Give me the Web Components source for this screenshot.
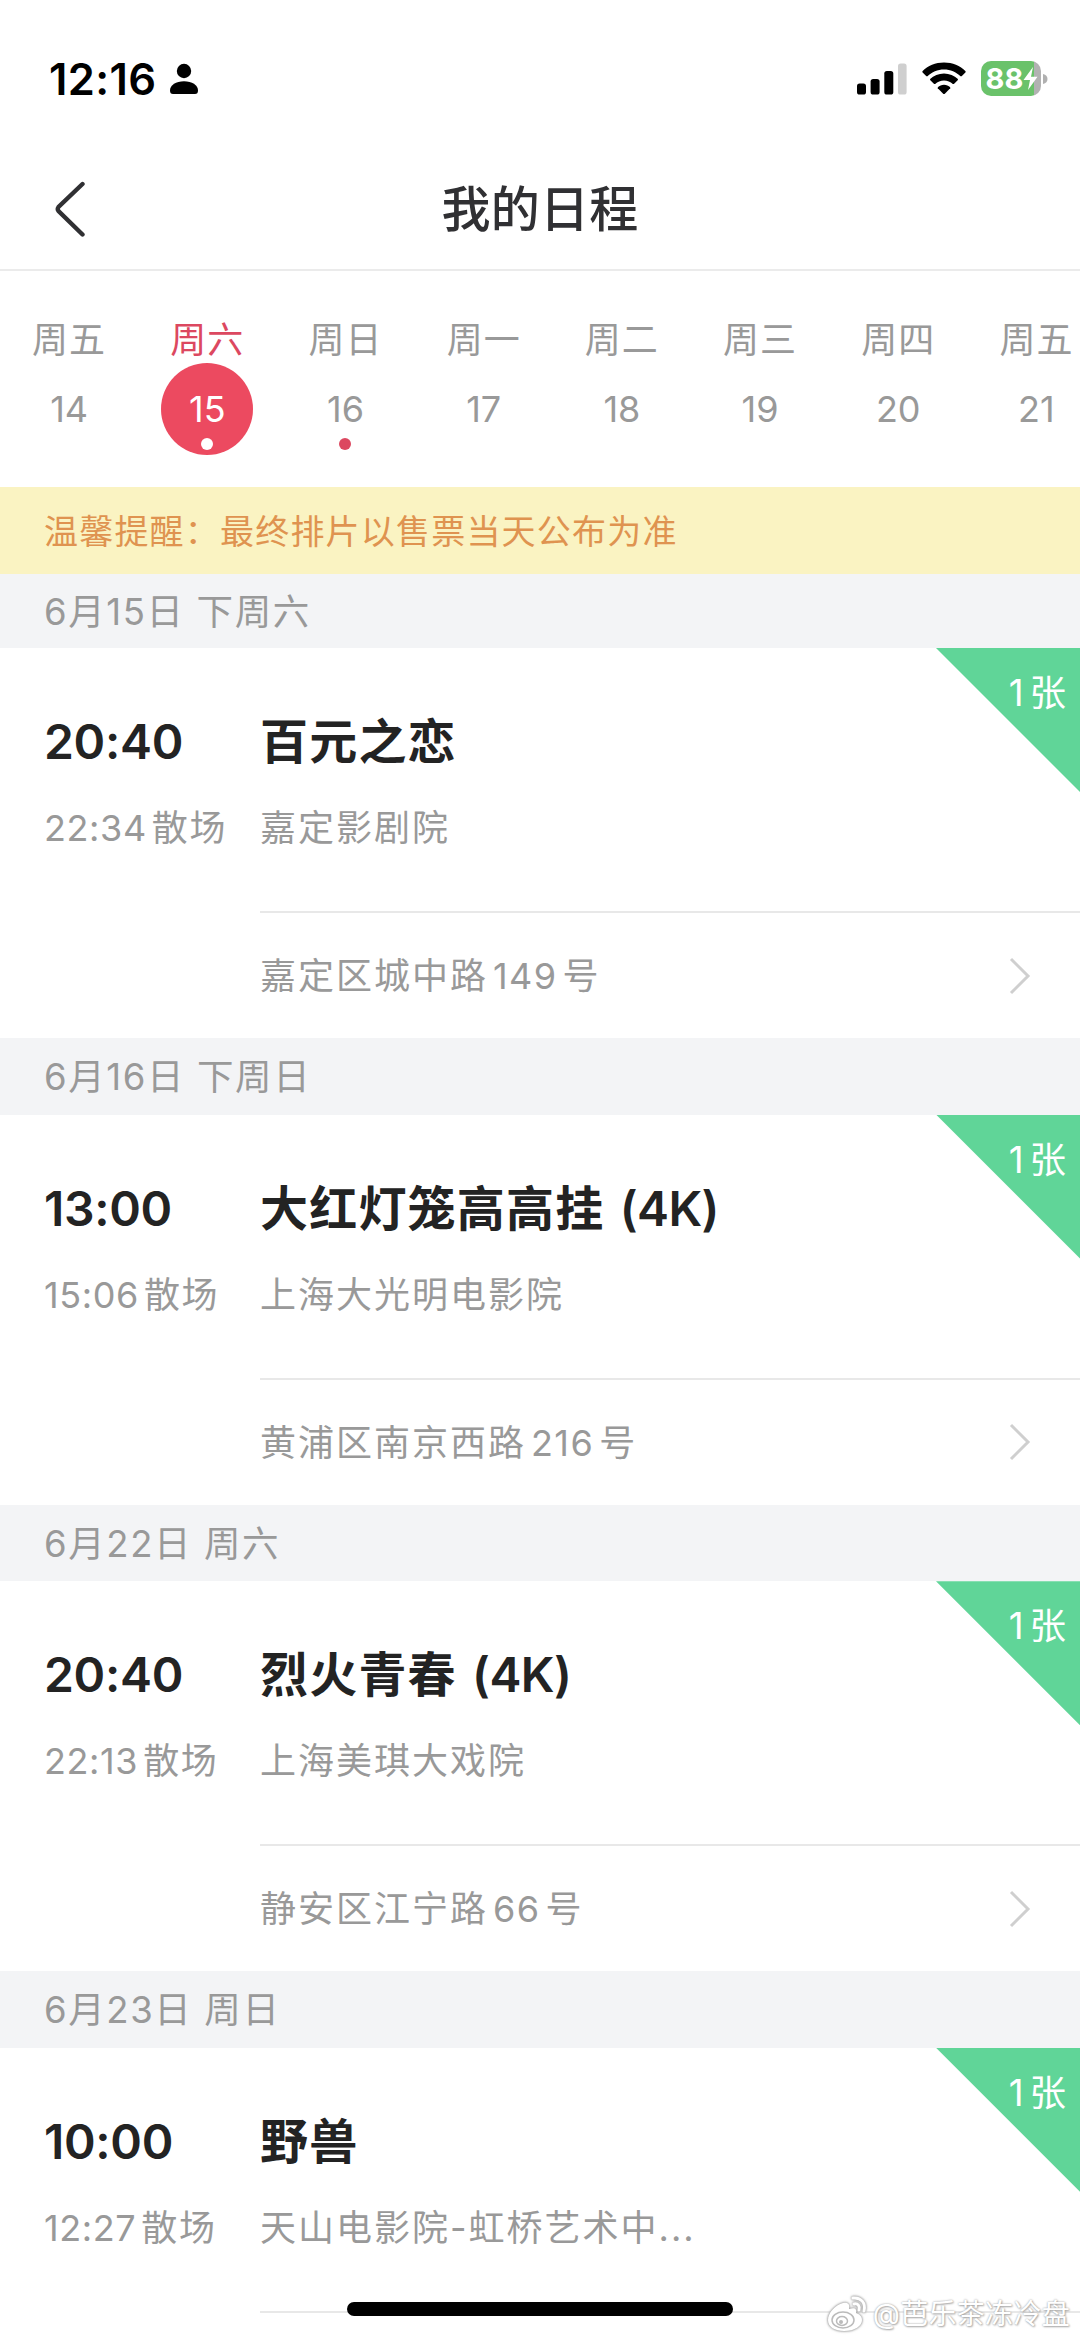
<!DOCTYPE html>
<html lang="zh-CN">
<head>
<meta charset="utf-8">
<meta name="viewport" content="width=device-width, initial-scale=1">
<title>我的日程</title>
<style>
  body {
    margin: 0;
    background: #fff;
    font-family: Inter, "Noto Sans CJK SC", sans-serif;
    color: #232323;
  }
</style>
</head>
<body>
<schedule-app>
  <status-bar time="12:16" battery="88"></status-bar>
  <nav-header>我的日程</nav-header>
  <week-strip>
    <day-cell label="周五" day="14"></day-cell>
    <day-cell label="周六" day="15" selected marked></day-cell>
    <day-cell label="周日" day="16" marked></day-cell>
    <day-cell label="周一" day="17"></day-cell>
    <day-cell label="周二" day="18"></day-cell>
    <day-cell label="周三" day="19"></day-cell>
    <day-cell label="周四" day="20"></day-cell>
    <day-cell label="周五" day="21"></day-cell>
  </week-strip>
  <notice-bar>温馨提醒：最终排片以售票当天公布为准</notice-bar>
  <day-group date="6月15日 下周六">
    <ticket-item start="20:40" end="22:34" count="1" address="嘉定区城中路149号">
      百元之恋
      <span slot="cinema">嘉定影剧院</span>
    </ticket-item>
  </day-group>
  <day-group date="6月16日 下周日">
    <ticket-item start="13:00" end="15:06" count="1" address="黄浦区南京西路216号">
      大红灯笼高高挂 <b>(4K)</b>
      <span slot="cinema">上海大光明电影院</span>
    </ticket-item>
  </day-group>
  <day-group date="6月22日 周六">
    <ticket-item start="20:40" end="22:13" count="1" address="静安区江宁路66号">
      烈火青春 <b>(4K)</b>
      <span slot="cinema">上海美琪大戏院</span>
    </ticket-item>
  </day-group>
  <day-group date="6月23日 周日">
    <ticket-item start="10:00" end="12:27" count="1">
      野兽
      <span slot="cinema">天山电影院-虹桥艺术中...</span>
    </ticket-item>
  </day-group>
  <home-indicator slot="overlay"></home-indicator>
  <water-mark slot="overlay">@芭乐茶冻冷盘</water-mark>
</schedule-app>

<script>
class ScheduleApp extends HTMLElement {
  constructor() {
    super();
    this.attachShadow({ mode: 'open' });
    this.shadowRoot.innerHTML = `
      <style>
        :host {
          display: flex;
          flex-direction: column;
          position: relative;
          width: 1080px;
          height: 2339px;
          overflow: hidden;
          background: #fff;
        }
      </style>
      <slot></slot>
      <slot name="overlay"></slot>
    `;
  }
}

class StatusBar extends HTMLElement {
  connectedCallback() {
    this.attachShadow({ mode: 'open' });
    this.shadowRoot.innerHTML = `
      <style>
        :host {
          display: flex;
          align-items: center;
          flex: none;
          box-sizing: border-box;
          height: 157px;
          padding: 0 32px 0 49px;
          color: #000;
        }
        .time {
          font-size: 43.5px;
          font-weight: 600;
          letter-spacing: 0.4px;
          margin-right: 12px;
        }
        .icons {
          display: flex;
          align-items: center;
          margin-left: auto;
        }
        .wifi { margin: 0 15px; }
        .battery {
          display: flex;
          align-items: center;
          justify-content: center;
          box-sizing: border-box;
          width: 60px;
          height: 35px;
          padding-left: 2px;
          border-radius: 10px;
          background: linear-gradient(90deg, #6ac26a 53px, #b2b2b2 53px);
          color: #fff;
          font-size: 29px;
          font-weight: 700;
        }
        .nub { margin-left: 2px; }
        svg { display: block; }
      </style>
      <span class="time">${this.getAttribute('time')}</span>
      <svg width="30" height="32" viewBox="0 0 30 32">
        <circle cx="15" cy="8" r="7.2"/>
        <path d="M1 27.500C1 22 7 18.200 15 18.200S29 22 29 27.500C29 30 28 31 26 31H4C2 31 1 30 1 27.500z"/>
      </svg>
      <div class="icons">
        <svg width="50" height="32" viewBox="0 0 50 32">
          <rect x="0" y="20.5" width="9" height="11" rx="2.6"/>
          <rect x="13.6" y="16" width="9" height="15.5" rx="2.6"/>
          <rect x="27.3" y="8" width="9" height="23.5" rx="2.6"/>
          <rect x="41" y="0.5" width="8.6" height="31" rx="2.6" fill="#cfcfcf"/>
        </svg>
        <svg class="wifi" width="44" height="33" viewBox="0 0 44 33">
          <path d="M22 .5C30.500.5 38.200 3.800 43.600 9.200L43.600 10.200 39.600 14.300 38.500 14.300C34.200 10.100 28.400 7.500 22 7.500S9.800 10.100 5.500 14.300L4.400 14.300.4 10.200.4 9.200C5.800 3.800 13.500.5 22 .5z"/>
          <path d="M22 11.500C27.400 11.500 32.300 13.600 35.900 17.100L35.900 18.100 31.900 22.100 30.800 22.100C28.500 19.900 25.400 18.500 22 18.500S15.500 19.900 13.200 22.100L12.100 22.100 8.100 18.100 8.100 17.100C11.700 13.600 16.600 11.500 22 11.500z"/>
          <path d="M22 22.800C24.400 22.800 26.600 23.700 28.200 25.200L28.200 26.200 22.600 32 21.400 32 15.800 26.200 15.800 25.200C17.400 23.700 19.600 22.800 22 22.800z"/>
        </svg>
        <div class="battery">${this.getAttribute('battery')}<svg width="15" height="25" viewBox="0 0 15 25"><path d="M10 1L.5 14H7L5 24 14.500 10.800H8z" fill="#fff"/></svg></div>
        <svg class="nub" width="5" height="12" viewBox="0 0 5 12"><path d="M0 1C3 1.500 4.500 3.500 4.500 6S3 10.500 0 11z" fill="#b0b0b0"/></svg>
      </div>
    `;
  }
}

class NavHeader extends HTMLElement {
  constructor() {
    super();
    this.attachShadow({ mode: 'open' });
    this.shadowRoot.innerHTML = `
      <style>
        :host {
          display: grid;
          grid-template-columns: 1fr auto 1fr;
          align-items: center;
          flex: none;
          box-sizing: border-box;
          height: 114px;
          padding: 0 54px 6px;
          border-bottom: 2px solid #ebebeb;
          color: #303033;
        }
        h1 {
          margin: 0;
          font-size: 49px;
          font-weight: 500;
          line-height: 60px;
          letter-spacing: 0.3px;
        }
      </style>
      <svg width="34" height="58" viewBox="0 0 34 58" fill="none" stroke="currentColor" stroke-width="4.400" stroke-linecap="round">
        <path d="M28.500 3L4.500 26Q3 28 4.500 30L28.500 53.500"/>
      </svg>
      <h1><slot></slot></h1>
    `;
  }
}

class WeekStrip extends HTMLElement {
  constructor() {
    super();
    this.attachShadow({ mode: 'open' });
    this.shadowRoot.innerHTML = `
      <style>
        :host {
          display: flex;
          flex: none;
          box-sizing: border-box;
          height: 216px;
          padding-top: 46px;
          overflow: hidden;
        }
      </style>
      <slot></slot>
    `;
  }
}

class DayCell extends HTMLElement {
  connectedCallback() {
    this.attachShadow({ mode: 'open' });
    this.shadowRoot.innerHTML = `
      <style>
        :host {
          display: flex;
          flex-direction: column;
          align-items: center;
          flex: none;
          width: 138.2px;
          color: #999;
          font-size: 36px;
        }
        .label {
          height: 46px;
          line-height: 47px;
          letter-spacing: 1px;
        }
        .day {
          position: relative;
          width: 92px;
          height: 92px;
          border-radius: 50%;
          line-height: 93px;
          text-align: center;
        }
        .dot {
          display: none;
          position: absolute;
          left: 40px;
          bottom: 5px;
          width: 12px;
          height: 12px;
          border-radius: 50%;
          background: #dc4860;
        }
        :host([selected]) .label { color: #dc4860; }
        :host([selected]) .day { background: #ec4a60; color: #fff; }
        :host([marked]) .dot { display: block; }
        :host([selected]) .dot { background: #fff; }
      </style>
      <span class="label">${this.getAttribute('label')}</span>
      <div class="day">${this.getAttribute('day')}<span class="dot"></span></div>
    `;
  }
}

class NoticeBar extends HTMLElement {
  constructor() {
    super();
    this.attachShadow({ mode: 'open' });
    this.shadowRoot.innerHTML = `
      <style>
        :host {
          display: block;
          flex: none;
          height: 87px;
          padding-left: 44px;
          background: #faf3c2;
          color: #df9350;
          font-size: 34px;
          line-height: 90px;
          letter-spacing: 1.2px;
        }
      </style>
      <slot></slot>
    `;
  }
}

class DayGroup extends HTMLElement {
  connectedCallback() {
    this.attachShadow({ mode: 'open' });
    this.shadowRoot.innerHTML = `
      <style>
        :host {
          display: block;
          flex: none;
        }
        h2 {
          margin: 0;
          height: 76.6px;
          padding-left: 44px;
          background: #f3f4f6;
          color: #999;
          font-size: 36.5px;
          font-weight: 400;
          line-height: 79px;
          letter-spacing: 1.6px;
        }
        :host(:first-of-type) h2 {
          height: 74px;
          line-height: 76px;
        }
      </style>
      <h2>${this.getAttribute('date')}</h2>
      <slot></slot>
    `;
  }
}

class TicketItem extends HTMLElement {
  connectedCallback() {
    // house numbers get a little air on both sides
    const address = (this.getAttribute('address') || '')
      .replace(/\d+/, '<span class="num">$&</span>');

    this.attachShadow({ mode: 'open' });
    this.shadowRoot.innerHTML = `
      <style>
        :host {
          display: grid;
          grid-template-columns: 216px 1fr;
          grid-template-rows: 263px 127px;
          position: relative;
          padding-left: 44px;
          background: #fff;
          color: #999;
          font-size: 36px;
          letter-spacing: 2px;
          white-space: nowrap;
        }
        .main, .when { padding-top: 64px; }
        h3, time {
          display: block;
          height: 60px;
          margin: 0 0 26px;
          color: #232323;
          font-size: 48px;
          font-weight: 600;
          line-height: 60px;
          letter-spacing: -0.3px;
        }
        h3 {
          letter-spacing: 1.2px;
        }
        ::slotted(b) {
          font-weight: 600;
          letter-spacing: -0.6px;
          margin-left: 2px;
        }
        p {
          margin: 0;
          line-height: 60px;
        }
        .end { letter-spacing: 0.6px; }
        .end span {
          margin-left: 5px;
          letter-spacing: 1.6px;
        }
        .address {
          grid-column: 2;
          display: flex;
          align-items: center;
          justify-content: space-between;
          padding-right: 48px;
          border-top: 2px solid #e8e8e8;
        }
        .address div { padding-bottom: 5px; }
        .num {
          margin: 0 5px;
          letter-spacing: 1.4px;
        }
        .corner {
          position: absolute;
          top: 0;
          right: 0;
          width: 144px;
          height: 144px;
          background: #60d598;
          clip-path: polygon(0 0, 100% 0, 100% 100%);
        }
        .corner span {
          position: absolute;
          top: 19px;
          right: 14px;
          display: flex;
          gap: 6px;
          color: #fff;
          font-size: 36.5px;
          line-height: 52px;
          letter-spacing: 0;
        }
        .corner i { font-style: normal; }
      </style>
      <div class="when">
        <time>${this.getAttribute('start')}</time>
        <p class="end">${this.getAttribute('end')}<span>散场</span></p>
      </div>
      <div class="main">
        <h3><slot></slot></h3>
        <p><slot name="cinema"></slot></p>
      </div>
      <div class="address">
        <div>${address}</div>
        <svg width="24" height="40" viewBox="0 0 24 40" fill="none" stroke="#cfcfcf" stroke-width="3">
          <path d="M3 3L20 20 3 37"/>
        </svg>
      </div>
      <div class="corner"><span>${this.getAttribute('count')}<i>张</i></span></div>
    `;
  }
}

class HomeIndicator extends HTMLElement {
  constructor() {
    super();
    this.attachShadow({ mode: 'open' });
    this.shadowRoot.innerHTML = `
      <style>
        :host {
          position: absolute;
          left: 347px;
          bottom: 23px;
          width: 386px;
          height: 14px;
          border-radius: 7px;
          background: #000;
        }
      </style>
    `;
  }
}

class WaterMark extends HTMLElement {
  constructor() {
    super();
    this.attachShadow({ mode: 'open' });
    this.shadowRoot.innerHTML = `
      <style>
        :host {
          display: flex;
          align-items: center;
          gap: 5px;
          position: absolute;
          right: 10px;
          bottom: 6px;
          color: #fff;
          font-size: 28px;
          line-height: 36px;
          letter-spacing: 0.3px;
          text-shadow: 0 0 2px #999, 1px 1px 2px #b0b0b0;
        }
        svg { filter: drop-shadow(0 0 1px #999) drop-shadow(0 0 1px #bbb); }
      </style>
      <svg width="42" height="38" viewBox="0 0 42 38" fill="none">
        <path d="M17 8C9 10 2 18 2 25c0 7 7 11 16 11 11 0 18-5 18-11 0-4-3-6-6-7 1-4-1-6-7-4 1-5-1-7-6-6z" fill="#fff"/>
        <ellipse cx="17" cy="25" rx="11" ry="8" stroke="#bbb" stroke-width="1.500"/>
        <ellipse cx="16" cy="26" rx="5.500" ry="4.500" stroke="#bbb" stroke-width="1.500"/>
        <circle cx="15" cy="27" r="2" fill="#bbb"/>
        <path d="M27 3c8-1 13 5 11 13M28 9c4-1 6 2 5 6" stroke="#fff" stroke-width="3" stroke-linecap="round"/>
      </svg>
      <span><slot></slot></span>
    `;
  }
}

customElements.define('schedule-app', ScheduleApp);
customElements.define('status-bar', StatusBar);
customElements.define('nav-header', NavHeader);
customElements.define('week-strip', WeekStrip);
customElements.define('day-cell', DayCell);
customElements.define('notice-bar', NoticeBar);
customElements.define('day-group', DayGroup);
customElements.define('ticket-item', TicketItem);
customElements.define('home-indicator', HomeIndicator);
customElements.define('water-mark', WaterMark);
</script>
</body>
</html>
